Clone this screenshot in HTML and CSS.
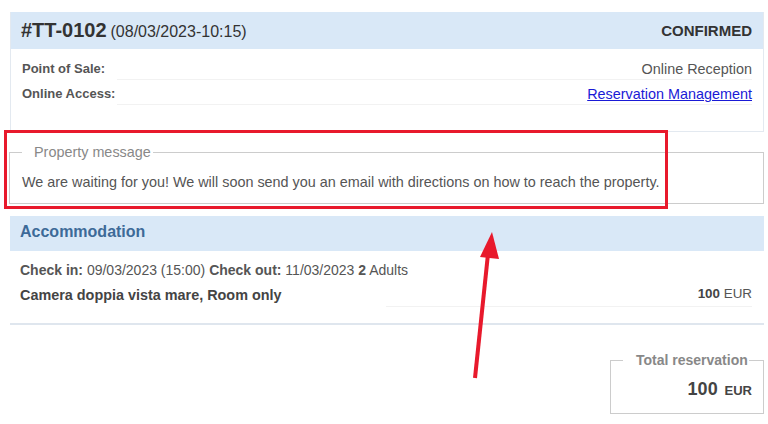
FILE: index.html
```html
<!DOCTYPE html>
<html lang="en">
<head>
    <meta charset="UTF-8">
    <meta name="viewport" content="width=device-width, initial-scale=1.0">
    <title>Reservation #TT-0102</title>
    <link rel="stylesheet" href="styles.css">
</head>
<body>
    <div class="page">
        <div class="panel">
            <div class="panel-head">
                <div class="res-title"><span class="res-code">#TT-0102</span> <span class="res-date">(08/03/2023-10:15)</span></div>
                <div class="res-status">CONFIRMED</div>
            </div>
            <div class="panel-body">
                <table class="info">
                    <tr>
                        <th>Point of Sale:</th>
                        <td>Online Reception</td>
                    </tr>
                    <tr>
                        <th>Online Access:</th>
                        <td><a href="#">Reservation Management</a></td>
                    </tr>
                </table>
            </div>
        </div>

        <fieldset class="msg">
            <legend>Property message</legend>
            <p>We are waiting for you! We will soon send you an email with directions on how to reach the property.</p>
        </fieldset>

        <div class="section-head">Accommodation</div>
        <div class="accom">
            <div class="dates"><b>Check in:</b> 09/03/2023 (15:00) <b>Check out:</b> 11/03/2023 <b>2</b> Adults</div>
            <table class="rooms">
                <tr>
                    <th>Camera doppia vista mare, Room only</th>
                    <td><b>100</b> EUR</td>
                </tr>
            </table>
        </div>

        <div class="totals">
            <fieldset class="total">
                <legend>Total reservation</legend>
                <div class="total-amount"><span class="num">100</span> <span class="cur">EUR</span></div>
            </fieldset>
        </div>
    </div>

    <!-- annotation on top of the page -->
    <div class="highlight"></div>
    <svg class="arrow" width="768" height="424" viewBox="0 0 768 424">
        <line x1="475" y1="378" x2="488" y2="254" stroke="#e8192c" stroke-width="4"/>
        <polygon points="492,232 480,257 499,259" fill="#e8192c"/>
    </svg>
</body>
</html>
```

FILE: styles.css
```css
body {
    margin: 0;
    background: #fff;
    font-family: "Liberation Sans", Arial, sans-serif;
    font-size: 14px;
    color: #555;
}
.page {
    padding: 12px 4px 0 10px;
}
.panel {
    border: 1px solid #e3e9f0;
    border-top: 0;
}
.panel-head {
    display: flex;
    justify-content: space-between;
    align-items: center;
    height: 37px;
    padding: 0 11px 0 10px;
    background: #d9e8f7;
    color: #333;
}
.res-code {
    font-size: 20px;
    font-weight: bold;
}
.res-date {
    font-size: 16px;
}
.res-status {
    font-size: 15px;
    font-weight: bold;
}
.panel-body {
    padding: 6px 11px 26px;
}
.info {
    width: 100%;
    border-collapse: collapse;
}
.info th {
    width: 1%;
    text-align: left;
    font-size: 13px;
    font-weight: bold;
    padding: 6px 2px 2px 0;
    line-height: 16px;
    white-space: nowrap;
}
.info td {
    text-align: right;
    font-size: 14.4px;
    padding: 6px 0 2px;
    line-height: 16px;
    border-bottom: 1px solid #f2f2f2;
}
.info a {
    color: #1a1ad6;
}
fieldset {
    margin: 0;
    border: 1px solid #ccc;
}
.msg {
    margin: 12px 0 12px -1px;
    padding: 12px 12px 11px;
    font-size: 14.4px;
}
.msg legend {
    padding: 0 2px 0 12px;
    color: #888;
}
.msg p {
    margin: 0;
    line-height: 20px;
}
.section-head {
    height: 35px;
    line-height: 31px;
    padding: 0 10px;
    box-sizing: border-box;
    background: #d9e8f7;
    color: #3d6a98;
    font-size: 16px;
    font-weight: bold;
}
.accom {
    padding: 10px 12px 16px 10px;
    border-bottom: 2px solid #dfe6ee;
}
.dates {
    font-size: 14px;
    line-height: 18px;
}
.rooms {
    width: 100%;
    border-collapse: collapse;
    margin-top: 3px;
}
.rooms th {
    text-align: left;
    font-size: 14.4px;
    color: #444;
    padding: 3px 0 2px;
    line-height: 18px;
    white-space: nowrap;
}
.rooms td {
    width: 50%;
    text-align: right;
    font-size: 13.4px;
    padding: 3px 0 3px;
    line-height: 18px;
    border-bottom: 1px solid #f2f2f2;
}
.rooms td b {
    color: #444;
}
.totals {
    display: flex;
    justify-content: flex-end;
    padding-top: 27px;
}
.total {
    width: 154px;
    box-sizing: border-box;
    padding: 11px 11px 13px 12px;
}
.total legend {
    padding: 0 1px 0 13px;
    color: #888;
    font-weight: bold;
}
.total-amount {
    text-align: right;
    color: #444;
    font-weight: bold;
}
.total-amount .num {
    font-size: 18px;
}
.total-amount .cur {
    font-size: 13px;
    margin-left: 3px;
}
.highlight {
    position: absolute;
    left: 4px;
    top: 130px;
    width: 664px;
    height: 79px;
    box-sizing: border-box;
    border: 3px solid #e8192c;
}
.arrow {
    position: absolute;
    left: 0;
    top: 0;
    pointer-events: none;
}
```
